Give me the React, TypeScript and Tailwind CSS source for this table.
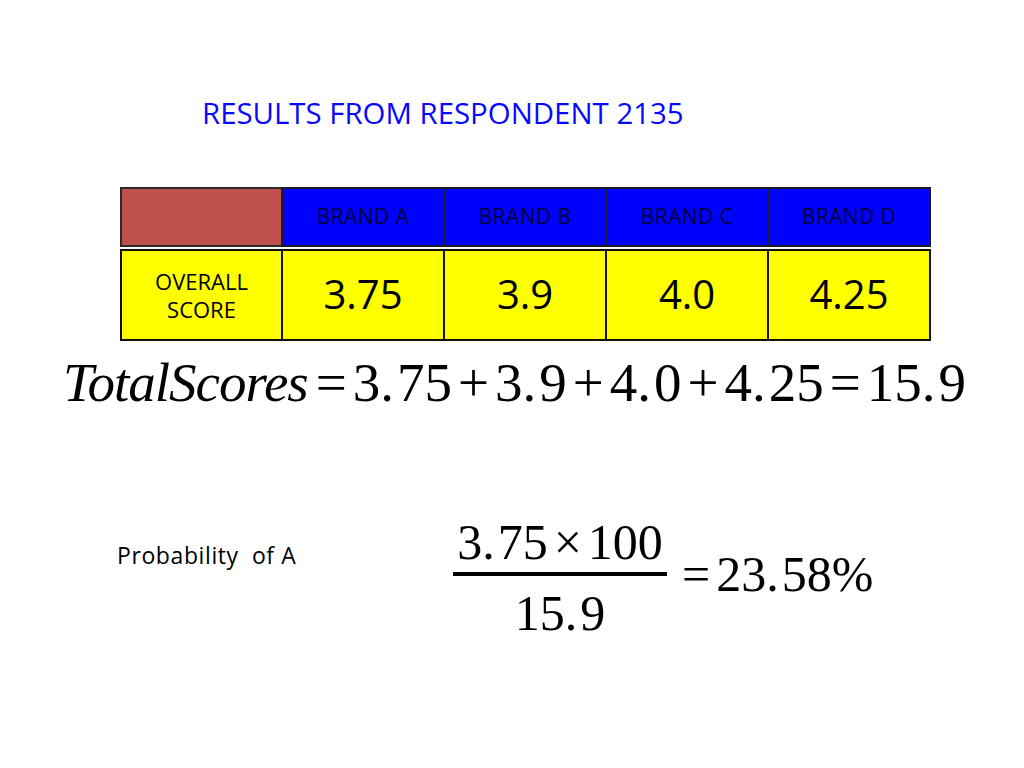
import React from 'react';

const brands = ['BRAND A', 'BRAND B', 'BRAND C', 'BRAND D'];
const scores = ['3.75', '3.9', '4.0', '4.25'];

const sans = { fontFamily: '"Open Sans", "Noto Sans", sans-serif' };
const serif = { fontFamily: '"Liberation Serif", "Times New Roman", serif' };

// a decimal number the way the equation editor sets it: a little air after the point
const Num = ({ a, b }: { a: string; b: string }) => (
  <>
    {a}
    <span className="mr-[3px]">.</span>
    {b}
  </>
);

const Op = ({ c }: { c: string }) => <span className="mx-[6px]">{c}</span>;

const App = () => {
  return (
    <div className="h-[768px] w-[1024px] overflow-hidden bg-white">
      {/* Title */}
      <div className="pl-[202px] pt-[93px]">
        <h1 className="text-[29.4px] leading-[40px] text-[#0808ff]" style={sans}>
          RESULTS FROM RESPONDENT 2135
        </h1>
      </div>

      {/* Score table */}
      <div className="ml-[120px] mt-[54px] w-[812px]" style={sans}>
        <div className="flex h-[60px]">
          <div className="w-[163px] border-2 border-[#2a2a2a] bg-[#c0504d]" />
          {brands.map((b) => (
            <div
              key={b}
              className="-ml-[2px] flex w-[164px] items-center justify-center border-2 border-[#1a1a2a] bg-[#0000ff] pb-[2px] text-[21px] leading-[28px] tracking-[0.4px] text-[#000038]"
            >
              {b}
            </div>
          ))}
        </div>
        <div className="mt-[2px] flex h-[92px]">
          <div className="flex w-[163px] flex-col items-center justify-center border-2 border-[#111] bg-[#ffff00] text-[22px] leading-[28px] text-black">
            <span>OVERALL</span>
            <span>SCORE</span>
          </div>
          {scores.map((s) => (
            <div
              key={s}
              className="-ml-[2px] flex w-[164px] items-center justify-center border-2 border-[#111] bg-[#ffff00] pb-[2px] text-[40px] leading-[50px] text-black"
            >
              {s}
            </div>
          ))}
        </div>
      </div>

      {/* Total equation */}
      <div className="ml-[63px] mt-[7px] flex h-[70px] whitespace-nowrap text-[55px] leading-[70px] text-black" style={serif}>
        <span className="mr-[2px] italic tracking-[-1px]">TotalScores</span>
        <Op c="=" />
        <span><Num a="3" b="75" /></span>
        <Op c="+" />
        <span><Num a="3" b="9" /></span>
        <Op c="+" />
        <span><Num a="4" b="0" /></span>
        <Op c="+" />
        <span><Num a="4" b="25" /></span>
        <Op c="=" />
        <span><Num a="15" b="9" /></span>
      </div>

      {/* Probability */}
      <div className="mt-[82px] flex items-start">
        <div
          className="ml-[117px] mt-[40px] w-[336px] whitespace-pre text-[23px] leading-[30px] tracking-[0.6px] text-black"
          style={sans}
        >
          {'Probability  of A'}
        </div>
        <div className="flex items-start text-black" style={serif}>
          <div className="flex w-[214px] flex-col items-center">
            <div className="mt-[14px] whitespace-nowrap text-[50px] leading-[56px]">
              <Num a="3" b="75" />
              <span className="mx-[6px]">×</span>
              100
            </div>
            <div className="mt-[2px] h-[4px] w-full bg-black" />
            <div className="mt-[9px] text-[50px] leading-[56px]">
              <Num a="15" b="9" />
            </div>
          </div>
          <div className="ml-[15px] mt-[46px] whitespace-nowrap text-[50px] leading-[56px]">
            <span className="mr-[6px]">=</span>
            <Num a="23" b="58" />%
          </div>
        </div>
      </div>
    </div>
  );
};

export default App;
